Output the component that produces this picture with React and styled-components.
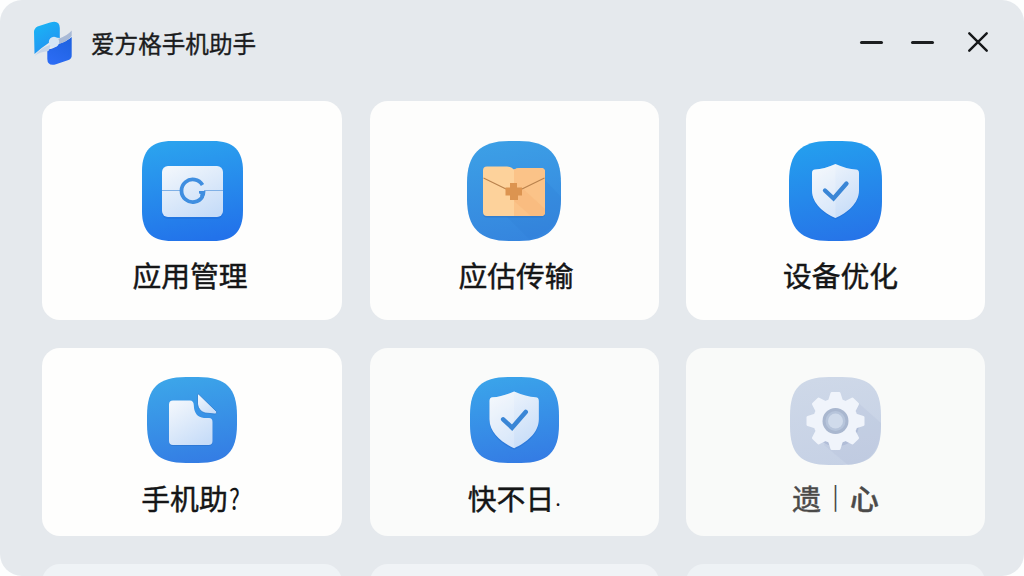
import styled, { createGlobalStyle } from 'styled-components';

const GlobalStyle = createGlobalStyle`
  * {
    box-sizing: border-box;
  }
  body {
    margin: 0;
    background: #fdfefe;
    font-family: 'Noto Sans CJK SC', 'Noto Sans', sans-serif;
  }
`;

// rounded "squircle" outline for the icon tiles
const squircle = (w, h, r, k = 0.3) => {
  const c = r * k;
  return `M${r} 0H${w - r}C${w - c} 0 ${w} ${c} ${w} ${r}V${h - r}C${w} ${h - c} ${w - c} ${h} ${w - r} ${h}H${r}C${c} ${h} 0 ${h - c} 0 ${h - r}V${r}C0 ${c} ${c} 0 ${r} 0Z`;
};

const Tile = ({ id, w, h, r, k, from, to, children }) => (
  <svg width={w} height={h} viewBox={`0 0 ${w} ${h}`}>
    <defs>
      <linearGradient id={id} x1="0.4" y1="0" x2="0.6" y2="1">
        <stop offset="0" stopColor={from} />
        <stop offset="1" stopColor={to} />
      </linearGradient>
      <linearGradient id={`${id}-paper`} x1="0.2" y1="0" x2="0.8" y2="1">
        <stop offset="0" stopColor="#f1f6fc" />
        <stop offset="1" stopColor="#c6dcf8" />
      </linearGradient>
    </defs>
    <path d={squircle(w, h, r, k)} fill={`url(#${id})`} />
    {children}
  </svg>
);

const AppsIcon = () => (
  <Tile id="apps" w={101} h={100} r={30} k={0.32} from="#2ba2ee" to="#2272ea">
    <rect x="20" y="26" width="61" height="52" rx="6" fill="#1c66d2" opacity="0.35" />
    <rect x="20" y="25" width="61" height="51" rx="6" fill="url(#apps-paper)" />
    <path d="M20 49.5H38M62 49.5H81" stroke="#7fb0e6" strokeWidth="1.2" />
    <path d="M60.5 44A11.3 11.3 0 1 0 60.5 55.5" fill="none" stroke="#3f8ee0" strokeWidth="3.8" />
    <path d="M57 50H63.5Q63.5 54 61.5 57L58 55Q59.5 53 57 52.500Z" fill="#3f8ee0" />
  </Tile>
);

const TransferIcon = () => (
  <Tile id="transfer" w={94} h={100} r={42} k={0.31} from="#3c9fe6" to="#3585de">
    <path d="M77 38L94 56V60C93 80 84 92 62 98L40 76H77Z" fill="#2c78d4" opacity="0.18" />
    <path d="M20 27H42L47 29L52 27H74Q78 27 78 31V72Q78 76.500 74 76.500H20Q16 76.500 16 72V31Q16 27 20 27Z" fill="#2a69b4" opacity="0.4" />
    <path d="M20 25.500H40Q44 25.500 47 28.500Q49 27 53 27H74Q78 27 78 31V71Q78 75 74 75H20Q16 75 16 71V29.500Q16 25.500 20 25.500Z" fill="#fdd29b" />
    <path d="M47 28.500Q49 27 53 27H74Q78 27 78 31V71Q78 75 74 75H47Z" fill="#fbc388" />
    <path d="M55 47L78 68V71Q78 75 74 75H64L47 60Z" fill="#f8b678" opacity="0.5" />
    <path d="M16.500 37L39 48M55 48L77.500 37" stroke="#b9824d" strokeWidth="1.2" />
    <path d="M43 42H50V46.500H55V54.500H51V59H43V54.500H38.500V46.500H43Z" fill="#dc9450" />
  </Tile>
);

const ShieldIcon = ({ id, w, h, r, from, to, scale, x, y }) => (
  <Tile id={id} w={w} h={h} r={r} k={0.3} from={from} to={to}>
    <g transform={`translate(${x} ${y}) scale(${scale})`}>
      <path
        d="M23.500 1.500Q12 7 3 7.500Q0 7.800 0 11V28C0 41 12 50 23.500 55.500C35 50 47 41 47 28V11Q47 7.800 44 7.500Q35 7 23.500 1.500Z"
        fill="#1b5fc4"
        opacity="0.3"
      />
      <path
        d="M23.500 0Q12 5 3 5.500Q0 5.800 0 9V26.500C0 39.500 12 49 23.500 54C35 49 47 39.500 47 26.500V9Q47 5.800 44 5.500Q35 5 23.500 0Z"
        fill={`url(#${id}-paper)`}
      />
      <path d="M23.500 0Q12 5 3 5.500Q0 5.800 0 9V26.500C0 39.500 12 49 23.500 54Z" fill="#fff" opacity="0.2" />
      <path d="M13 26.500L21.500 34.500L34.500 19.500" fill="none" stroke="#3a86d6" strokeWidth="4.300" strokeLinecap="round" />
    </g>
  </Tile>
);

const NoteIcon = () => (
  <Tile id="note" w={90} h={86} r={39} k={0.28} from="#3ca5e9" to="#347de4">
    <path d="M26 25H43Q46.500 25 46.800 29Q47 41 57 42H62Q65.500 42 65.500 46V65Q65.500 69 61.500 69H26Q22 69 22 65V29Q22 25 26 25Z" fill="#1d61bb" opacity="0.35" />
    <path d="M26 23.500H43Q46.500 23.500 46.800 28Q47 40 57 41H62Q65.500 41 65.500 45V64Q65.500 68 61.500 68H26Q22 68 22 64V27.500Q22 23.500 26 23.500Z" fill="url(#note-paper)" />
    <path d="M50.500 17.500Q51 16.500 52 17.500L69.500 34.500Q70.500 37 68 37L58 36Q51.500 34 50.500 27Z" fill="url(#note-paper)" stroke="#257bd2" strokeWidth="0.800" />
  </Tile>
);

const GearIcon = () => (
  <Tile id="gear" w={91} h={88} r={39} k={0.28} from="#ced8e8" to="#c6d1e5">
    <path d="M64 22L91 46C91 74 80 86 58 88L34 68Z" fill="#b0bdd9" opacity="0.25" />
    <g transform="translate(45.500 44)">
      <circle cx="1" cy="3" r="22.500" fill="#a5b3d0" opacity="0.6" />
      <g fill="#f0f4fb">
        {[0, 45, 90, 135, 180, 225, 270, 315].map(a => (
          <path key={a} d="M-7.500 -20L-5 -28Q-4.700 -29 -3.700 -29H3.700Q4.700 -29 5 -28L7.500 -20Z" transform={`rotate(${a})`} />
        ))}
        <circle r="22.500" />
      </g>
      <circle r="13" fill="#a9b7cf" />
      <circle r="10" fill="#b7c5db" />
      <circle r="7.500" fill="#d0dbeb" />
    </g>
  </Tile>
);

const Logo = () => (
  <svg width="40" height="46" viewBox="0 0 40 46">
    <defs>
      <linearGradient id="logo-a" x1="0" y1="0" x2="0.5" y2="1">
        <stop offset="0" stopColor="#18b8f5" />
        <stop offset="1" stopColor="#2492f2" />
      </linearGradient>
      <linearGradient id="logo-b" x1="0.8" y1="0" x2="0.3" y2="1">
        <stop offset="0" stopColor="#1e62e0" />
        <stop offset="1" stopColor="#2c6cf4" />
      </linearGradient>
    </defs>
    <path d="M1 11Q1 7.500 4.500 5.500L17 1.500Q26.500 -1.500 26.800 7V17Q20 16 17 21Q8 27 1.500 33Z" fill="url(#logo-a)" />
    <path d="M38.700 16V34Q39 37.500 35.500 39L23 43.300Q14.500 45.500 14.300 38V28Q21 29 25 23Q33 21 38.700 16Z" fill="url(#logo-b)" />
    <path d="M25 18Q34 15 38.700 9.500V15Q35 20 26 23Z" fill="#a9bad6" />
    <path d="M18 23.500Q7 27 1.500 35Q6 31 15.500 30Z" fill="#c6d5ea" />
    <circle cx="21" cy="21" r="5.200" fill="#d6e5f5" />
  </svg>
);

const cards = [
  { label: '应用管理', shift: -2, icon: <AppsIcon /> },
  { label: '应估传输', shift: 2, icon: <TransferIcon /> },
  {
    label: '设备优化',
    shift: 5,
    icon: <ShieldIcon id="device" w={93} h={100} r={40} from="#249eee" to="#2674e8" x={23} y={23} scale={1} />,
  },
  { label: '手机助', mark: '?', shift: -2, icon: <NoteIcon /> },
  {
    label: '快不日',
    mark: '.',
    shift: 0,
    icon: <ShieldIcon id="quick" w={89} h={86} r={38} from="#3aa3ea" to="#347ce4" x={19.5} y={14.5} scale={1.05} />,
  },
  { label: '遗', divided: '心', shift: 0, muted: true, icon: <GearIcon /> },
];

const App = () => {
  return (
    <>
      <GlobalStyle />
      <Window>
        <TitleBar>
          <Logo />
          <Title>爱方格手机助手</Title>
          <Controls>
            <Dash />
            <Dash />
            <svg width="20" height="20" viewBox="0 0 20 20" stroke="#16181a" strokeWidth="2.400" strokeLinecap="round">
              <path d="M1.300 1.300L18.700 18.700M18.700 1.300L1.300 18.700" />
            </svg>
          </Controls>
        </TitleBar>
        <Grid>
          {cards.map((card, i) => (
            <Card key={card.label} $short={i > 2} $tone={tones[i]}>
              {card.icon}
              <Label $shift={card.shift} $muted={card.muted} $short={i > 2}>
                {card.label}
                {card.mark && <Mark $dot={card.mark === '.'}>{card.mark}</Mark>}
                {card.divided && (
                  <>
                    <Divider>|</Divider>
                    <Heavy>{card.divided}</Heavy>
                  </>
                )}
              </Label>
            </Card>
          ))}
          <Card $tone="#eff3f6" />
          <Card $tone="#f0f3f6" />
          <Card $tone="#eef2f5" />
        </Grid>
      </Window>
    </>
  );
};

const tones = ['#fefefd', '#fdfdfc', '#fefefd', '#fefefd', '#fafbfa', '#f9faf9'];

const Window = styled.div`
  width: 1024px;
  height: 576px;
  overflow: hidden;
  border-radius: 22px;
  background: #e5e9ed;
`;

const TitleBar = styled.header`
  display: flex;
  align-items: center;
  height: 101px;
  padding: 0 35px 14px 33px;
`;

const Title = styled.h1`
  margin: -2px 0 0 18px;
  font-size: 23.6px;
  font-weight: 400;
  line-height: 34px;
  color: #1b1c1d;
  -webkit-text-stroke: 0.35px #1b1c1d;
`;

const Controls = styled.div`
  display: flex;
  align-items: center;
  margin: -3px 1px 0 auto;

  svg {
    margin-left: 6px;
  }
`;

const Dash = styled.span`
  width: 23px;
  height: 3px;
  margin-right: 28px;
  border-radius: 1.5px;
  background: #1c1e20;
`;

const Grid = styled.main`
  display: grid;
  grid-template-columns: 300px 289px 299px;
  grid-template-rows: 219px 188px 188px;
  gap: 28px 27.5px;
  padding-left: 42px;
`;

const Card = styled.section`
  display: flex;
  flex-direction: column;
  align-items: center;
  padding-top: ${props => (props.$short ? '29px' : '40px')};
  border-radius: 18px;
  background: ${props => props.$tone};
`;

const Label = styled.p`
  display: flex;
  margin: ${props => (props.$short ? 'auto 0 18px' : '14px 0 0')};
  padding-left: ${props => Math.max(props.$shift, 0) * 2}px;
  padding-right: ${props => Math.max(-props.$shift, 0) * 2}px;
  font-size: 28.8px;
  line-height: 40px;
  font-weight: 400;
  white-space: nowrap;
  color: ${props => (props.$muted ? '#4b4a49' : '#151617')};
  -webkit-text-stroke: 0.45px currentColor;
`;

const Mark = styled.span`
  width: ${props => (props.$dot ? '5px' : '11px')};
  margin-left: ${props => (props.$dot ? '1px' : '0')};
  font-size: ${props => (props.$dot ? '20px' : '28.8px')};
  transform: ${props => (props.$dot ? 'none' : 'scaleX(0.8)')};
  -webkit-text-stroke: 0;
`;

const Divider = styled.span`
  width: 29px;
  margin-top: -3px;
  font-size: 24px;
  text-align: center;
  -webkit-text-stroke: 0;
`;

const Heavy = styled.span`
  font-weight: 500;
`;

export default App;
